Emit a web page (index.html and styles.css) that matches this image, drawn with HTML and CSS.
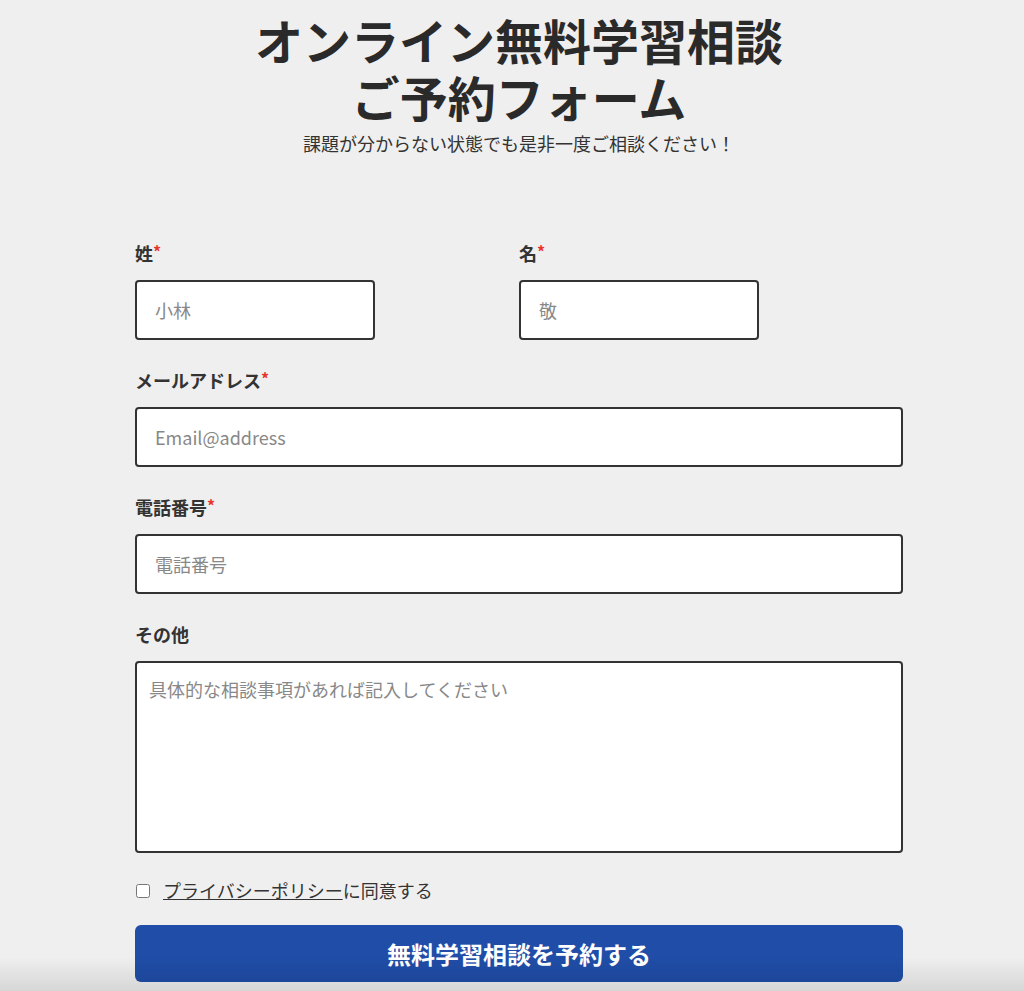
FILE: index.html
```html
<!DOCTYPE html>
<html lang="ja">
<head>
<meta charset="utf-8">
<title>オンライン無料学習相談 ご予約フォーム</title>
<link rel="stylesheet" href="styles.css">
</head>
<body>
<div class="page">
  <header class="head">
    <h1 class="title"><span class="title-line">オンライン無料学習相談</span><span class="title-line">ご予約フォーム</span></h1>
    <p class="lead">課題が分からない状態でも是非一度ご相談ください！</p>
  </header>
  <form class="form">
    <div class="row-2">
      <div class="field">
        <label class="label">姓<span class="req">*</span></label>
        <input class="input input-short" type="text" placeholder="小林">
      </div>
      <div class="field">
        <label class="label">名<span class="req">*</span></label>
        <input class="input input-short" type="text" placeholder="敬">
      </div>
    </div>
    <div class="field">
      <label class="label">メールアドレス<span class="req">*</span></label>
      <input class="input" type="email" placeholder="Email@address">
    </div>
    <div class="field">
      <label class="label">電話番号<span class="req">*</span></label>
      <input class="input" type="tel" placeholder="電話番号">
    </div>
    <div class="field">
      <label class="label">その他</label>
      <textarea class="textarea" placeholder="具体的な相談事項があれば記入してください"></textarea>
    </div>
    <label class="agree"><input class="check" type="checkbox"><span><a class="policy" href="#">プライバシーポリシー</a>に同意する</span></label>
    <button class="submit" type="button">無料学習相談を予約する</button>
  </form>
</div>
</body>
</html>
```

FILE: styles.css
```css
html, body {
  margin: 0;
  padding: 0;
  background: #efefef;
}
body {
  font-family: "Noto Sans CJK JP", "Noto Sans", sans-serif;
  color: #333;
  height: 991px;
  overflow: hidden;
}
body::after {
  content: "";
  position: fixed;
  left: 0;
  right: 0;
  bottom: 0;
  height: 34px;
  background: linear-gradient(to bottom, rgba(0,0,0,0), rgba(0,0,0,0.1));
  pointer-events: none;
}
.page {
  width: 768px;
  margin-left: 135px;
  padding-top: 11px;
}
.head {
  text-align: center;
}
.title {
  margin: 0;
  font-size: 48px;
  font-weight: 700;
  color: #2a2a2a;
}
.title-line {
  display: block;
  height: 57px;
  line-height: 57px;
}
.lead {
  margin: 5px 0 0;
  font-size: 18px;
  line-height: 27px;
  color: #333;
}
.form {
  margin-top: 83px;
  display: flex;
  flex-direction: column;
}
.row-2 {
  display: grid;
  grid-template-columns: 384px 384px;
}
.field {
  display: flex;
  flex-direction: column;
  align-items: flex-start;
  margin-bottom: 27px;
}
.label {
  font-size: 18px;
  line-height: 27px;
  font-weight: 700;
  color: #333;
  margin-bottom: 13px;
}
.req {
  color: #e8352b;
  font-size: 16px;
  vertical-align: top;
  line-height: 22px;
}
.input, .textarea {
  box-sizing: border-box;
  width: 768px;
  border: 2px solid #333;
  border-radius: 4px;
  background: #fff;
  font-family: "Noto Sans CJK JP", "Noto Sans", sans-serif;
  font-size: 18px;
  color: #333;
  outline: none;
}
.input {
  height: 60px;
  padding: 0 18px;
}
.input-short {
  width: 240px;
}
.textarea {
  height: 192px;
  padding: 13px 12px;
  resize: none;
  line-height: 27px;
}
.input::placeholder, .textarea::placeholder {
  color: #888;
}
.field:last-of-type {
  margin-bottom: 24px;
}
.agree {
  display: flex;
  align-items: center;
  font-size: 18px;
  line-height: 27px;
  color: #333;
}
.check {
  width: 14px;
  height: 14px;
  margin: 0 13px 0 1px;
}
.policy {
  color: #333;
  text-decoration: underline;
}
.submit {
  margin-top: 21px;
  height: 57px;
  width: 768px;
  border: none;
  border-radius: 6px;
  background: #204da7;
  color: #fff;
  font-family: "Noto Sans CJK JP", "Noto Sans", sans-serif;
  font-size: 24px;
  font-weight: 700;
  cursor: pointer;
}
```
